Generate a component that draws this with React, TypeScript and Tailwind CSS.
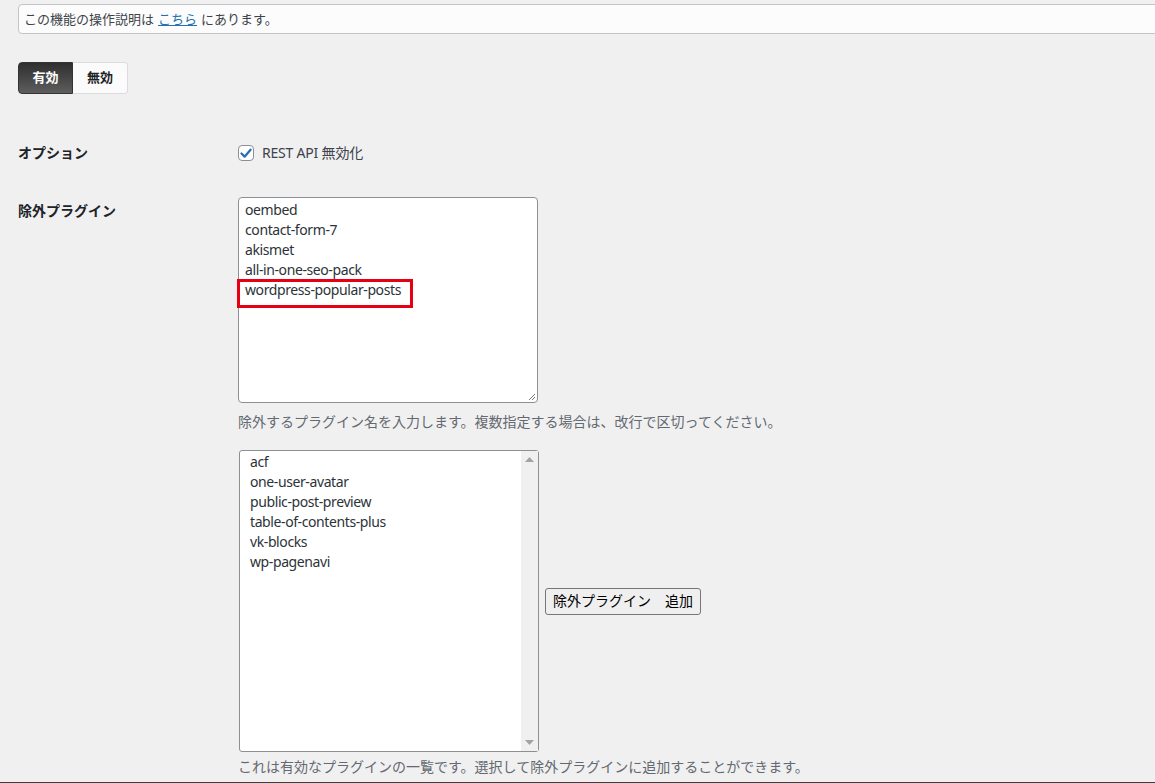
import React from "react";

const jp = { fontFamily: '"Noto Sans", "Noto Sans CJK JP", sans-serif' };

export default function App() {
  const excluded = ["oembed", "contact-form-7", "akismet", "all-in-one-seo-pack", "wordpress-popular-posts"];
  const active = ["acf", "one-user-avatar", "public-post-preview", "table-of-contents-plus", "vk-blocks", "wp-pagenavi"];
  return (
    <div className="relative h-[783px] overflow-hidden bg-[#f0f0f1] text-[#1d2327]" style={jp}>
      <div className="pl-[18px] pt-[4px]">
        {/* notice */}
        <div className="-mr-[10px] flex h-[30px] items-center rounded-l-[4px] border border-[#c3c4c7] bg-[#fcfcfc] pl-[5px] text-[13px] leading-[20px] text-[#3c434a]">
          <span>この機能の操作説明は </span>
          <a className="mx-[4px] text-[#2271b1] underline" href="#">こちら</a>
          <span>にあります。</span>
        </div>

        {/* toggle */}
        <div className="mt-[28px] flex h-[32px] w-[110px]">
          <div className="flex w-[55px] items-center justify-center rounded-l-[4px] border border-[#333] bg-gradient-to-b from-[#2f2f2f] to-[#5e5e5e] text-[13px] font-bold text-white">
            有効
          </div>
          <div className="flex w-[55px] items-center justify-center rounded-r-[4px] border border-l-0 border-[#dcdcde] bg-[#fbfbfb] text-[13px] font-bold text-[#1d2327]">
            無効
          </div>
        </div>

        {/* option row */}
        <div className="mt-[50px] flex h-[18px] items-center">
          <div className="w-[220px] text-[14px] font-bold leading-[20px]">オプション</div>
          <div className="flex items-center">
            <div className="flex h-[16px] w-[16px] items-center justify-center rounded-[4px] border border-[#8c8f94] bg-white">
              <svg width="15" height="15" viewBox="0 0 20 20">
                <path d="M3.5 10 L8 14.5 L16.5 4.5" fill="none" stroke="#2271b1" strokeWidth="3.2" strokeLinecap="round" strokeLinejoin="round" />
              </svg>
            </div>
            <span className="ml-[8px] text-[14px] leading-[20px] tracking-[-0.2px] text-[#3c434a]">REST API 無効化</span>
          </div>
        </div>

        {/* exclusion row */}
        <div className="mt-[35px] flex">
          <div className="w-[220px] pt-[4px] text-[14px] font-bold leading-[20px]">除外プラグイン</div>
          <div className="flex flex-col">
            <div className="relative h-[206px] w-[300px] rounded-[4px] border border-[#8c8f94] bg-white px-[6px] pt-[2px] text-[14px] leading-[20px] tracking-[-0.4px] text-[#2c3338]">
              {excluded.map((p) => (
                <div key={p}>{p}</div>
              ))}
              <div className="absolute left-[-2px] top-[81px] h-[29px] w-[176px] border-[3px] border-[#e60012]" />
              <svg className="absolute bottom-[1px] right-[1px]" width="9" height="9" viewBox="0 0 9 9">
                <path d="M8 2 L2 8 M8 5 L5 8" stroke="#7a7a7a" strokeWidth="1" />
              </svg>
            </div>
            <div className="mt-[9px] text-[14px] leading-[20px] text-[#646970]">
              除外するプラグイン名を入力します。複数指定する場合は、改行で区切ってください。
            </div>

            <div className="mt-[18px] flex items-center">
              <div className="ml-[1px] flex h-[302px] w-[300px] rounded-[3px] border border-[#8c8f94] bg-white">
                <div className="flex-1 pl-[10px] pt-[1px] text-[14px] leading-[20px] tracking-[-0.4px] text-[#2c3338]">
                  {active.map((p) => (
                    <div key={p}>{p}</div>
                  ))}
                </div>
                <div className="flex w-[17px] flex-col items-center justify-between bg-[#f0f0f0] py-[6px]">
                  <svg width="9" height="5" viewBox="0 0 9 5">
                    <path d="M0 5 L4.5 0 L9 5 Z" fill="#a3a3a3" />
                  </svg>
                  <svg width="9" height="5" viewBox="0 0 9 5">
                    <path d="M0 0 L4.5 5 L9 0 Z" fill="#a3a3a3" />
                  </svg>
                </div>
              </div>
              <button className="ml-[6px] h-[27px] rounded-[3px] border border-[#767676] bg-[#efefef] px-[7px] text-[14px] leading-[20px] text-black">
                除外プラグイン　追加
              </button>
            </div>
            <div className="mt-[5px] text-[14px] leading-[20px] text-[#646970]">
              これは有効なプラグインの一覧です。選択して除外プラグインに追加することができます。
            </div>
          </div>
        </div>
      </div>
      <div className="absolute bottom-0 left-0 h-[1px] w-full bg-[#3c3c3c]" />
    </div>
  );
}
